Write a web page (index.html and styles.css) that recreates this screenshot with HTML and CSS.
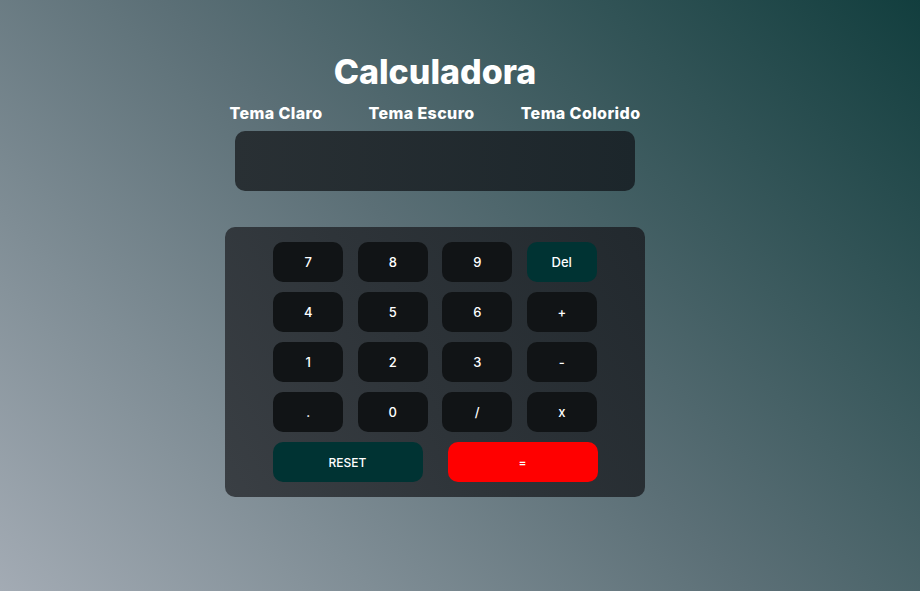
FILE: index.html
```html
<!DOCTYPE html>
<html lang="pt-BR">
<head>
<meta charset="utf-8">
<title>Calculadora</title>
<link rel="stylesheet" href="styles.css">
</head>
<body>
<main class="app">
  <h1 class="title">Calculadora</h1>
  <nav class="themes">
    <span class="theme">Tema Claro</span>
    <span class="theme">Tema Escuro</span>
    <span class="theme">Tema Colorido</span>
  </nav>
  <div class="display"></div>
  <section class="keypad">
    <div class="keys">
      <button class="key">7</button>
      <button class="key">8</button>
      <button class="key">9</button>
      <button class="key key-del">Del</button>
      <button class="key">4</button>
      <button class="key">5</button>
      <button class="key">6</button>
      <button class="key">+</button>
      <button class="key">1</button>
      <button class="key">2</button>
      <button class="key">3</button>
      <button class="key">-</button>
      <button class="key">.</button>
      <button class="key">0</button>
      <button class="key">/</button>
      <button class="key">x</button>
    </div>
    <div class="actions">
      <button class="key key-reset">RESET</button>
      <button class="key key-equal">=</button>
    </div>
  </section>
</main>
</body>
</html>
```
FILE: styles.css
```css
html, body {
  margin: 0;
  height: 100%;
}
body {
  background: linear-gradient(45deg, #a3abb4 0%, #5b6f76 50%, #123e3e 100%);
  font-family: Inter, "Noto Sans", sans-serif;
  color: #fff;
  overflow: hidden;
}
.app {
  display: flex;
  flex-direction: column;
  align-items: center;
  padding-top: 52px;
  padding-right: 50px;
}
.title {
  margin: 0;
  font-size: 34px;
  font-weight: 800;
  line-height: 40px;
}
.themes {
  display: flex;
  gap: 46px;
  margin-top: 11px;
}
.theme {
  font-size: 16px;
  font-weight: 800;
  line-height: 20px;
  letter-spacing: 0.4px;
}
.display {
  width: 400px;
  height: 60px;
  margin-top: 8px;
  border-radius: 10px;
  background: linear-gradient(90deg, #293034 0%, #1c262b 100%);
}
.keypad {
  width: 420px;
  box-sizing: border-box;
  margin-top: 36px;
  padding: 15px 0 15px;
  border-radius: 10px;
  background: linear-gradient(60deg, #3a3f44 0%, #2e3439 45%, #22292e 100%);
  display: flex;
  flex-direction: column;
  align-items: center;
  gap: 10px;
}
.keys {
  display: grid;
  grid-template-columns: repeat(4, 70px);
  column-gap: 14.5px;
  row-gap: 10px;
}
.key {
  height: 40px;
  border: none;
  border-radius: 10px;
  background: #111416;
  color: #fff;
  font-family: Inter, "Noto Sans", sans-serif;
  font-size: 13px;
  font-weight: 500;
  padding: 0;
}
.key-del, .key-reset {
  background: #003333;
}
.actions {
  display: flex;
  gap: 25px;
}
.key-reset, .key-equal {
  width: 150px;
  font-size: 12px;
}
.key-equal {
  background: #ff0000;
}
```
